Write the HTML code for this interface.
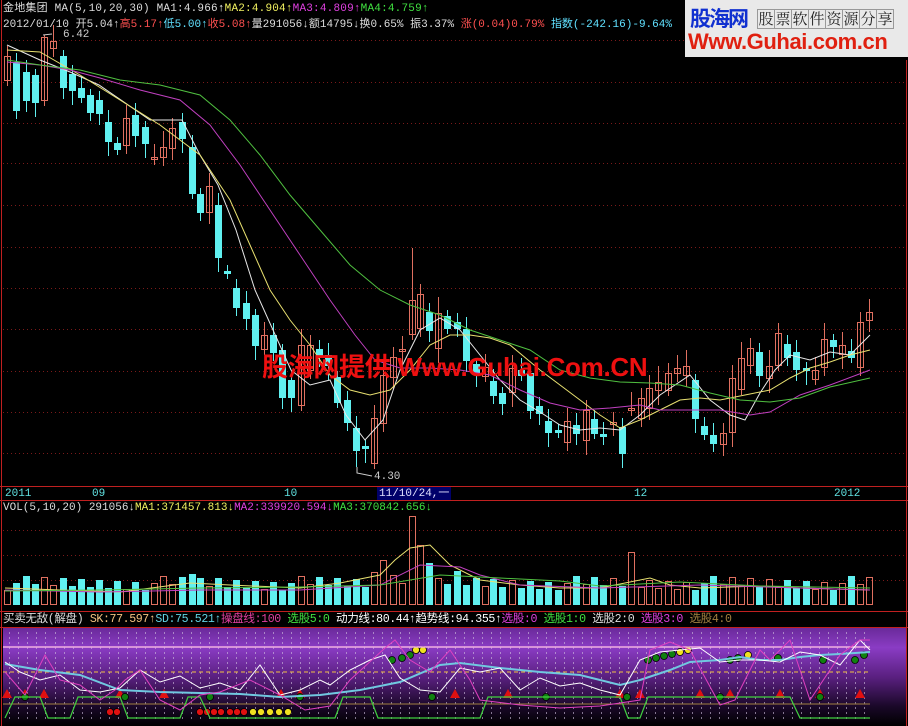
<!DOCTYPE html>
<html><head><meta charset="utf-8">
<style>
html,body{margin:0;padding:0;background:#000;width:908px;height:726px;overflow:hidden;font-family:"Liberation Mono","Noto Sans CJK SC",monospace;}
.t{position:absolute;font-size:11px;white-space:nowrap;line-height:12px;letter-spacing:0px}
#logo{position:absolute;left:685px;top:0;width:223px;height:57px;background:#e9e9e9;overflow:hidden}
.bx{display:inline-block;width:16px;height:18px;border:1px solid #999;margin-right:-1px;text-align:center;line-height:18px}
</style></head><body>
<svg id="s" width="908" height="726" style="position:absolute;left:0;top:0">
<defs>
<linearGradient id="pg" x1="0" y1="0" x2="0" y2="1">
<stop offset="0" stop-color="#6a2a9a"/><stop offset="0.2" stop-color="#8a3cc4"/><stop offset="0.5" stop-color="#5a2080"/><stop offset="0.8" stop-color="#1a0828"/><stop offset="1" stop-color="#000"/>
</linearGradient>
</defs>
<rect x="3" y="628" width="904" height="98" fill="url(#pg)"/>
<g id="grid" stroke="#7a1a1a" stroke-dasharray="1,3"></g>
<g id="g"></g>
<g stroke="#c02020" fill="none" stroke-width="1">
<line x1="1.5" y1="0" x2="1.5" y2="726"/>
<line x1="906.5" y1="60" x2="906.5" y2="726"/>
<line x1="0" y1="486.5" x2="908" y2="486.5"/>
<line x1="0" y1="500.5" x2="908" y2="500.5"/>
<line x1="0" y1="611.5" x2="908" y2="611.5"/>
<line x1="0" y1="627.5" x2="908" y2="627.5"/>
</g>
<rect x="377" y="487" width="74" height="13" fill="#00006a"/>
<g fill="none" stroke-width="1">
<polyline stroke="#e8e8e8" points="7,45 40,60 70,72 99,85 150,120 182,120 200,155 218,185 236,230 255,290 273,330 291,370 310,385 330,380 346,415 365,440 383,420 400,370 420,330 440,318 460,330 480,355 500,380 520,400 540,412 560,425 580,430 600,428 620,430 640,415 660,395 690,375 710,400 730,415 745,420 760,393 775,370 790,355 810,360 830,352 850,355 870,335"/>
<polyline stroke="#e8e070" points="7,50 40,52 80,75 120,100 160,125 200,155 230,200 250,245 270,290 290,320 310,345 330,375 350,390 370,395 390,390 410,370 430,345 450,335 470,335 490,338 510,345 540,370 560,385 580,400 600,415 620,428 640,420 660,410 680,400 700,398 720,400 745,395 770,390 790,378 810,368 830,362 850,355 870,350"/>
<polyline stroke="#c040c0" points="7,62 40,65 70,70 100,78 140,90 180,100 210,125 240,165 270,210 300,255 330,300 355,335 375,360 400,368 430,368 460,370 490,375 520,390 550,403 580,410 610,408 640,405 660,410 690,410 720,410 750,415 770,412 800,395 830,385 870,370"/>
<polyline stroke="#50c040" points="7,60 40,65 80,70 120,80 160,85 200,95 230,120 260,155 290,195 320,230 350,265 380,290 410,305 440,315 470,330 500,340 530,350 560,370 590,378 620,382 650,383 680,385 710,393 740,400 770,402 800,398 830,387 870,378"/>
</g>
<polyline fill="none" stroke="#ccc" points="43,35 52,34"/>
<polyline fill="none" stroke="#ccc" points="357,467 357,473 372,476"/>
<g fill="none" stroke-width="1">
<polyline stroke="#e8e070" points="5,588 60,590 120,592 190,583 230,585 300,588 340,583 380,575 395,560 410,548 430,545 450,565 480,580 520,585 560,588 600,588 630,582 650,578 670,585 700,588 760,586 800,588 870,590"/>
<polyline stroke="#c040c0" points="5,590 100,592 200,590 300,590 380,585 420,565 460,567 480,575 520,585 600,588 700,585 800,588 870,590"/>
<polyline stroke="#50c040" points="5,591 100,590 200,588 300,587 380,585 440,575 500,578 560,581 600,586 680,582 760,586 870,588"/>
</g>
<g fill="none">
<line x1="3" y1="647" x2="870" y2="647" stroke="#f0b0e0" stroke-width="1.5"/>
<line x1="3" y1="672" x2="870" y2="672" stroke="#f0c040" stroke-dasharray="4,3"/>
<line x1="3" y1="704" x2="870" y2="704" stroke="#a08040"/>
<polyline stroke="#40d040" stroke-width="1.2" points="5,718 15,697 40,697 48,718 70,718 78,697 120,697 128,718 180,718 188,697 200,697 210,718 335,718 343,697 370,697 378,718 480,718 488,697 620,697 628,718 640,718 648,697 790,697 800,718 870,718"/>
<polyline stroke="#70c8e0" stroke-width="2" points="5,664 40,670 80,675 120,690 160,692 200,693 240,694 280,697 320,695 360,690 400,682 440,665 460,663 500,668 540,672 580,675 620,685 640,680 670,670 690,662 720,660 740,657 760,660 780,660 800,657 820,655 840,654 870,652"/>
<polyline stroke="#ffffff" points="5,662 20,672 40,680 60,675 80,690 100,692 120,688 140,670 160,682 180,676 200,688 220,683 240,690 260,665 280,695 300,690 320,680 330,685 350,670 370,660 385,655 400,678 420,690 440,692 460,668 480,672 500,668 520,690 540,678 560,686 580,683 600,690 620,695 640,660 660,652 680,650 700,648 720,662 740,660 760,660 780,662 800,652 820,655 840,665 860,640 870,650"/>
<polyline stroke="#e040c0" points="5,672 25,695 45,655 60,680 80,685 100,700 115,690 125,680 140,670 160,700 180,710 200,695 220,692 250,680 280,695 305,710 330,706 350,680 385,648 395,640 410,660 430,672 450,650 470,680 480,700 520,705 560,708 600,706 640,700 650,650 670,642 690,650 720,705 735,700 760,650 770,660 790,640 810,700 840,655 860,640 870,640"/>
</g>
</svg>
<div id="logo">
 <div style="position:absolute;left:5px;top:7px;font:bold 21px 'Noto Sans CJK SC',sans-serif;color:#1030d0;letter-spacing:-2px;line-height:22px">股海网</div>
 <div style="position:absolute;left:72px;top:8px;font:15px 'Noto Serif CJK SC',serif;color:#222;white-space:nowrap"><span class="bx">股</span><span class="bx">票</span><span class="bx">软</span><span class="bx">件</span><span class="bx">资</span><span class="bx">源</span><span class="bx">分</span><span class="bx">享</span></div>
 <div style="position:absolute;left:3px;top:29px;font:bold 22px 'Liberation Sans',sans-serif;color:#e02010;letter-spacing:-0.4px;white-space:nowrap">Www.Guhai.com.cn</div>
</div>
<div class="t" style="left:3px;top:3px;color:#ddd;letter-spacing:0.2px">金地集团 MA(5,10,20,30) MA1:4.966<span style="color:#fff">↑</span><span style="color:#f0f060">MA2:4.904↑</span><span style="color:#e040e0">MA3:4.809↑</span><span style="color:#40e040">MA4:4.759↑</span></div>
<div class="t" style="left:3px;top:19px;color:#ddd;letter-spacing:0px">2012/01/10 开5.04↑<span style="color:#ff5050">高5.17↑</span><span style="color:#60e0ff">低5.00↑</span><span style="color:#ff5050">收5.08↑</span>量291056↓额14795↓换0.65% 振3.37% <span style="color:#ff5050">涨(0.04)0.79%</span> <span style="color:#60e0ff">指数(-242.16)-9.64%</span></div>
<div class="t" style="left:63px;top:29px;color:#ccc">6.42</div>
<div class="t" style="left:374px;top:471px;color:#ccc">4.30</div>
<div class="t" style="left:5px;top:488px;color:#60e0e0">2011</div>
<div class="t" style="left:92px;top:488px;color:#60e0e0">09</div>
<div class="t" style="left:284px;top:488px;color:#60e0e0">10</div>
<div class="t" style="left:379px;top:488px;color:#e0e0ff">11/10/24,一</div>
<div class="t" style="left:634px;top:488px;color:#60e0e0">12</div>
<div class="t" style="left:834px;top:488px;color:#60e0e0">2012</div>
<div class="t" style="left:3px;top:502px;color:#ddd">VOL(5,10,20) 291056↓<span style="color:#f0f060">MA1:371457.813↓</span><span style="color:#e040e0">MA2:339920.594↓</span><span style="color:#40e040">MA3:370842.656↓</span></div>
<div class="t" style="left:3px;top:614px;color:#ddd;font-size:11.6px;letter-spacing:-0.4px">买卖无敌(解盘) <span style="color:#f0c080">SK:77.597↑</span><span style="color:#60d0e0">SD:75.521↑</span><span style="color:#e040a0">操盘线:100</span> <span style="color:#40e040">选股5:0</span> <span style="color:#fff">动力线:80.44↑趋势线:94.355↑</span><span style="color:#e040e0">选股:0</span> <span style="color:#40e040">选股1:0</span> <span style="color:#ddd">选股2:0</span> <span style="color:#e040e0">选股3:0</span> <span style="color:#a08040">选股4:0</span></div>
<div style="position:absolute;left:262px;top:347px;font:bold 26px 'Liberation Sans','Noto Sans CJK SC',sans-serif;color:#ee1010;white-space:nowrap;letter-spacing:-0.3px">股海网提供 Www.Guhai.Com.CN</div>
<script>
var NS="http://www.w3.org/2000/svg",g=document.getElementById('g'),gr=document.getElementById('grid');
function el(t,a,p){var e=document.createElementNS(NS,t);for(var k in a)e.setAttribute(k,a[k]);(p||g).appendChild(e);return e;}
[40,82,123,163,205,247,288,329,371,412,453].forEach(function(y){el('line',{x1:3,x2:906,y1:y+.5,y2:y+.5},gr)});
[530,555,580].forEach(function(y){el('line',{x1:3,x2:906,y1:y+.5,y2:y+.5},gr)});
for(var x=9;x<870;x+=9.1)el('line',{x1:Math.round(x)+.5,x2:Math.round(x)+.5,y1:632,y2:722,stroke:'#d0c0e0','stroke-dasharray':'2,3','stroke-opacity':0.6},gr);
var C=[[7,56,80,1],[16,62,110,0],[26,72,100,0],[35,75,102,0],[44,37,100,1],[53,41,48,1],[63,56,87,0],[72,74,90,0],[81,88,97,0],[90,95,112,0],[99,100,113,0],[108,122,141,0],[117,143,149,0],[126,118,145,1],[135,115,135,0],[145,127,143,0],[154,157,159,1],[163,147,157,1],[172,128,148,1],[182,122,138,0],[192,147,193,0],[200,194,212,0],[209,186,212,1],[218,205,257,0],[227,271,273,0],[236,288,307,0],[246,303,318,0],[255,315,345,0],[264,335,349,1],[273,335,352,0],[282,350,397,0],[291,380,397,0],[301,345,405,1],[310,345,370,1],[319,349,355,0],[328,355,365,0],[337,377,402,0],[347,400,422,0],[356,428,450,0],[365,446,448,0],[374,418,463,1],[383,375,423,1],[393,357,377,1],[402,349,351,1],[412,300,334,1],[420,294,328,1],[429,312,330,0],[438,313,348,1],[447,316,328,0],[457,322,328,0],[466,329,360,0],[476,364,372,0],[485,367,376,1],[493,381,395,0],[502,393,403,0],[512,368,392,1],[521,370,375,0],[530,373,410,0],[539,406,413,0],[548,421,432,0],[558,430,432,0],[567,421,442,1],[576,425,433,0],[586,410,440,1],[594,419,433,0],[603,434,436,0],[613,422,424,1],[622,427,453,0],[631,408,410,1],[641,398,418,1],[649,388,408,1],[658,382,390,1],[668,373,390,1],[677,368,373,1],[686,366,375,1],[695,380,418,0],[704,426,434,0],[713,435,443,0],[723,433,444,1],[732,378,432,1],[741,358,389,1],[750,348,365,1],[759,352,375,0],[769,366,378,1],[778,333,365,1],[787,344,357,0],[796,352,369,0],[806,368,370,0],[815,370,379,1],[824,339,367,1],[833,340,346,0],[842,345,354,1],[851,351,357,0],[860,322,367,1],[869,312,320,1]];
var V={192:574,218:578,190:574,374:572,383:560,412:516,420:545,429:563,438:578,447:584,631:552};
C.forEach(function(c,i){var x=c[0],col=c[3]?'#e07060':'#60f0f0';
 var hi=c[1]-(c[3]?10:6)-(i%3)*3,lo=c[2]+6+(i%4)*3;
 if(x==44)hi=35;if(x==412)hi=248;if(x==356)lo=467;
 el('line',{x1:x+.5,x2:x+.5,y1:hi,y2:lo,stroke:col});
 var h=Math.max(1,c[2]-c[1]);
 if(c[3])el('rect',{x:x-2.5,y:c[1]+.5,width:6,height:h,fill:'none',stroke:col});
 else el('rect',{x:x-3,y:c[1],width:7,height:h+1,fill:col});
 var vt=V[x]||(590-((i*37)%15)-(i>40&&i<50?6:0));
 if(c[3])el('rect',{x:x-2.5,y:vt+.5,width:6,height:604-vt,fill:'none',stroke:'#e07060'});
 else el('rect',{x:x-3,y:vt,width:7,height:605-vt,fill:'#60f0f0'});
});
[7,25,44,120,164,281,300,455,508,620,640,700,730,780,820,860].forEach(function(x){el('path',{d:'M'+(x-5)+' 698 L'+x+' 689 L'+(x+5)+' 698Z',fill:'#e01010'})});
function dot(x,y,c){el('circle',{cx:x,cy:y,r:3.5,fill:c,stroke:'#000','stroke-width':0.8})}
[[25,697],[125,697],[210,697],[300,697],[432,697],[546,697],[627,697],[720,697],[820,697]].forEach(function(p){dot(p[0],p[1],'#108010')});
[[110,712],[117,712],[200,712],[207,712],[214,712],[221,712],[230,712],[237,712],[244,712]].forEach(function(p){dot(p[0],p[1],'#e01010')});
[[253,712],[261,712],[270,712],[279,712],[288,712]].forEach(function(p){dot(p[0],p[1],'#f0e020')});
[[392,660],[402,658],[410,655],[416,650],[423,650],[648,660],[656,658],[664,656],[672,654],[680,652],[688,650],[730,660],[738,658],[748,655],[778,658],[823,660],[855,660],[864,655]].forEach(function(p){dot(p[0],p[1],(p[0]==416||p[0]==423||p[0]==680||p[0]==688||p[0]==748)?'#f0e020':'#108010')});
</script>
</body></html>
